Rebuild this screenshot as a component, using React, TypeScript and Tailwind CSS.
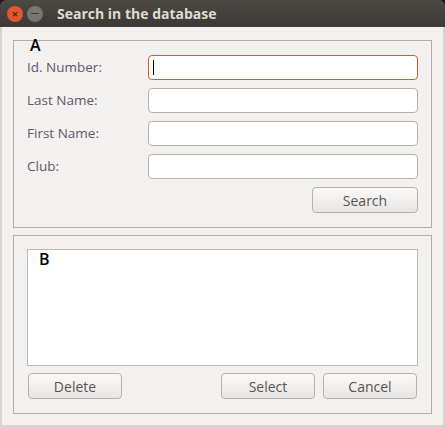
const labels = ["Id. Number:", "Last Name:", "First Name:", "Club:"];

const Btn = ({ label, w }: { label: string; w: string }) => (
  <button
    type="button"
    className={`${w} h-[26px] rounded-[4px] border border-[#b5b2ac] bg-gradient-to-b from-[#faf9f8] to-[#e8e6e3] text-[14px] text-[#555]`}
  >
    {label}
  </button>
);

export default function App() {
  return (
    <div
      className="h-[428px] w-[445px] bg-[#2c0d24]"
      style={{ fontFamily: '"Open Sans", "DejaVu Sans", sans-serif' }}
    >
      <div className="flex h-full flex-col overflow-hidden rounded-t-[6px]">
        {/* title bar */}
        <div className="flex h-[27px] shrink-0 items-center bg-gradient-to-b from-[#4a4944] to-[#3b3a36] pl-[7px]">
          <div className="flex h-[16px] w-[16px] items-center justify-center rounded-full bg-[#e4572b] text-[11px] font-bold leading-none text-[#3a2a22]">
            ×
          </div>
          <div className="ml-[4px] flex h-[16px] w-[16px] items-center justify-center rounded-full bg-[#77766f]">
            <div className="h-[1.5px] w-[8px] bg-[#3b3a36]" />
          </div>
          <span className="ml-[14px] text-[14px] font-bold text-[#dfdbd2]">
            Search in the database
          </span>
        </div>

        {/* body */}
        <div className="flex flex-1 flex-col border-x-2 border-b-[3px] border-[#d6d4d0] bg-[#f2f1f0] px-[11px] pt-[13px] text-[13.5px] text-[#66546a]">
          {/* group A */}
          <div className="relative h-[188px] border border-[#b0aea9] pl-[13px] pr-[13px] pt-[14px]">
            <span className="absolute left-[16px] top-[-4px] text-[16px] font-semibold leading-none text-black">
              A
            </span>
            <div className="flex flex-col gap-[8px]">
              {labels.map((l, i) => (
                <div key={l} className="flex h-[25px] items-center">
                  <span className="w-[121px] shrink-0">{l}</span>
                  <div
                    className={`flex h-[25px] flex-1 items-center rounded-[4px] border bg-white ${
                      i === 0 ? "border-[#e0582a]" : "border-[#b5b2ac]"
                    }`}
                  >
                    {i === 0 && <div className="ml-[4px] h-[15px] w-[1px] bg-black" />}
                  </div>
                </div>
              ))}
            </div>
            <div className="mt-[8px] flex justify-end">
              <Btn label="Search" w="w-[106px]" />
            </div>
          </div>

          {/* group B */}
          <div className="mt-[7px] flex h-[179px] flex-col border border-[#b0aea9] px-[13px] pt-[13px]">
            <div className="relative h-[117px] border border-[#bbb9b5] bg-white">
              <span className="absolute left-[11px] top-[1px] text-[16px] font-semibold leading-none text-black">
                B
              </span>
            </div>
            <div className="mt-[7px] flex items-center px-[1px]">
              <Btn label="Delete" w="w-[94px]" />
              <div className="flex-1" />
              <Btn label="Select" w="w-[94px]" />
              <div className="w-[8px]" />
              <Btn label="Cancel" w="w-[94px]" />
            </div>
          </div>
        </div>
      </div>
    </div>
  );
}
